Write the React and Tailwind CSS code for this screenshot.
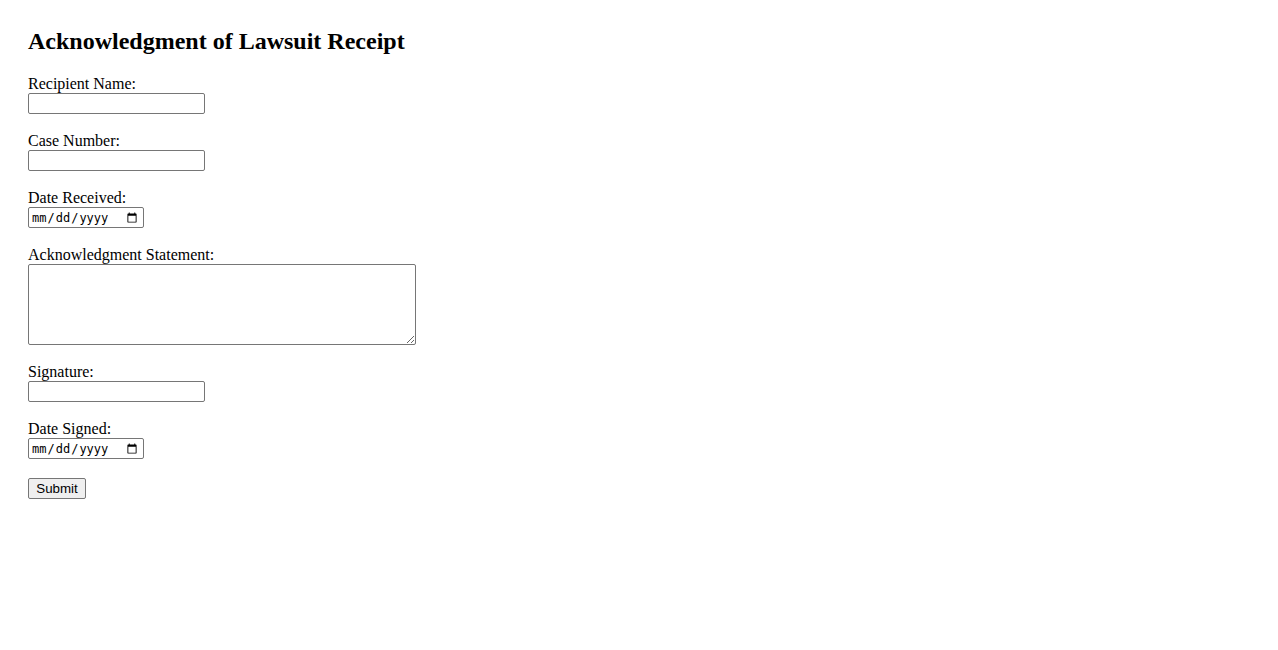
export default function App() {
  const serif = { fontFamily: '"Liberation Serif", "Times New Roman", serif' };
  const inputCls =
    "block w-[177px] h-[21px] border border-[#767676] rounded-[2px] px-[2px] py-[1px] bg-white text-[13px] font-['Liberation_Sans',sans-serif]";
  const dateCls =
    "block w-[116px] h-[21px] border border-[#767676] rounded-[2px] pl-[2px] pr-[3px] bg-white text-[12px] text-black font-['DejaVu_Sans_Mono',monospace]";
  const Label = ({ children }) => (
    <label className="block text-[16px] leading-[16px] pb-[1px] text-black">{children}</label>
  );
  return (
    <div className="min-h-[650px] bg-white pt-[28px] pl-[28px] text-black" style={serif}>
      <h2 className="text-[24px] leading-[27px] font-bold mb-[21px]">Acknowledgment of Lawsuit Receipt</h2>
      <form className="flex flex-col gap-[19px]" onSubmit={(e) => e.preventDefault()}>
        <div>
          <Label>Recipient Name:</Label>
          <input type="text" className={inputCls} />
        </div>
        <div>
          <Label>Case Number:</Label>
          <input type="text" className={inputCls} />
        </div>
        <div>
          <Label>Date Received:</Label>
          <input type="date" className={dateCls} />
        </div>
        <div>
          <Label>Acknowledgment Statement:</Label>
          <textarea className="block w-[388px] h-[81px] border border-[#767676] rounded-[2px] p-[2px] bg-white text-[13px] font-['Liberation_Mono',monospace] resize" />
        </div>
        <div>
          <Label>Signature:</Label>
          <input type="text" className={inputCls} />
        </div>
        <div>
          <Label>Date Signed:</Label>
          <input type="date" className={dateCls} />
        </div>
        <div>
          <button
            type="submit"
            className="block w-[58px] h-[21px] border border-[#767676] rounded-[2px] bg-[#efefef] text-[13.33px] leading-[17px] text-black font-['Liberation_Sans',sans-serif]"
          >
            Submit
          </button>
        </div>
      </form>
    </div>
  );
}
